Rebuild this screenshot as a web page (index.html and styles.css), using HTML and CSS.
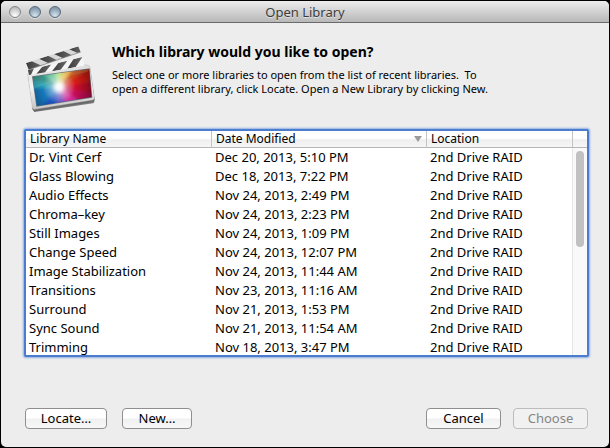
FILE: index.html
```
<!DOCTYPE html>
<html lang="en">
<head>
  <meta charset="UTF-8">
  <meta name="viewport" content="width=device-width, initial-scale=1.0">
  <title>Open Library</title>
  <link rel="stylesheet" href="styles.css">
</head>
<body>
  <div class="window">
    <header class="titlebar">
      <div class="lights">
        <button class="light close" aria-label="Close"></button>
        <button class="light" aria-label="Minimize"></button>
        <button class="light" aria-label="Zoom"></button>
      </div>
      <h1>Open Library</h1>
    </header>

    <main class="content">
      <div class="intro">
        <!-- Clapperboard -->
        <svg class="app-icon" viewBox="27 9 216 210" aria-hidden="true">
          <defs>
            <clipPath id="screen"><path d="M53 108L222 84L230 168L66 195Z"/></clipPath>
            <clipPath id="upper"><path d="M33 66L190 16L197 33L41 86Z"/></clipPath>
            <clipPath id="lower"><path d="M39 87L202 48L208 74L42 102Z"/></clipPath>
            <filter id="soft" x="-20%" y="-20%" width="140%" height="140%"><feGaussianBlur stdDeviation="4"/></filter>
            <filter id="shade" x="-20%" y="-20%" width="140%" height="140%"><feGaussianBlur stdDeviation="2"/></filter>
            <radialGradient id="glow" gradientUnits="userSpaceOnUse" cx="132" cy="138" r="50">
              <stop offset="0" stop-color="#fff"/>
              <stop offset="0.2" stop-color="#fff" stop-opacity="0.9"/>
              <stop offset="0.5" stop-color="#fff" stop-opacity="0.4"/>
              <stop offset="1" stop-color="#fff" stop-opacity="0"/>
            </radialGradient>
            <radialGradient id="edge" gradientUnits="userSpaceOnUse" cx="132" cy="138" r="105">
              <stop offset="0.5" stop-color="#000" stop-opacity="0"/>
              <stop offset="1" stop-color="#000" stop-opacity="0.4"/>
            </radialGradient>
            <linearGradient id="metal" x1="0" y1="0" x2="0" y2="1">
              <stop offset="0" stop-color="#dcdcdc"/>
              <stop offset="0.5" stop-color="#f4f4f4"/>
              <stop offset="1" stop-color="#c4c4c4"/>
            </linearGradient>
            <linearGradient id="dark" x1="0" y1="0" x2="1" y2="0">
              <stop offset="0" stop-color="#3a3a3a"/>
              <stop offset="1" stop-color="#686868"/>
            </linearGradient>
          </defs>
          <path d="M50 202L58 213L234 187Q239 186 238 180Z" fill="#333" opacity="0.6" filter="url(#shade)"/>
          <path d="M39 102L208 73L220 75Q224 76 225 80L239 175Q240 181 234 183L62 211Q56 212 54 206Z" fill="#686868"/>
          <path d="M38 99L208 71L219 73Q224 74 225 79L238 169Q239 175 233 177L60 205Q54 206 52 200Z" fill="url(#metal)" stroke="#aaa" stroke-width="1"/>
          <g clip-path="url(#lower)">
            <path d="M30 40H215V110H30Z" fill="#f5f5f5"/>
            <g fill="url(#dark)">
              <path d="M37 86L57 82L48 102H38Z"/>
              <path d="M82 77L109 70L88 97L62 101Z"/>
              <path d="M130 66L157 59L137 86L110 92Z"/>
              <path d="M175 55L203 47L182 78L157 83Z"/>
            </g>
          </g>
          <g clip-path="url(#upper)">
            <path d="M30 10H210V90H30Z" fill="#d8d8d8"/>
            <g fill="url(#dark)">
              <path d="M32 66L50 61L80 74L41 87Z"/>
              <path d="M72 53L99 44L126 58L101 67Z"/>
              <path d="M117 39L145 30L171 43L145 52Z"/>
              <path d="M163 25L190 16L198 33L188 36Z"/>
            </g>
          </g>
          <path d="M41 86L197 33" fill="none" stroke="#777" stroke-width="2"/>
          <path d="M51 106L224 82L232 170L64 197Z" fill="#777"/>
          <g clip-path="url(#screen)">
            <path d="M40 70H250V210H40Z" fill="#3974a8"/>
            <g filter="url(#soft)">
              <path d="M132 138L20 150L20 100Z" fill="#22a0b4"/>
              <path d="M132 138L20 108L40 60Z" fill="#268b80"/>
              <path d="M132 138L40 60L112 50Z" fill="#55bd8b"/>
              <path d="M132 138L108 50L155 50Z" fill="#a8dc62"/>
              <path d="M132 138L150 50L205 60Z" fill="#e6b23e"/>
              <path d="M132 138L192 60L250 70Z" fill="#c74914"/>
              <path d="M132 138L250 68L250 125Z" fill="#d81c13"/>
              <path d="M132 138L250 120L250 168Z" fill="#c90729"/>
              <path d="M132 138L250 160L228 210Z" fill="#c80b59"/>
              <path d="M132 138L230 205L165 225Z" fill="#cf2b95"/>
              <path d="M132 138L170 225L120 230Z" fill="#6940b7"/>
              <path d="M132 138L125 230L55 220Z" fill="#1b51bd"/>
              <path d="M132 138L60 220L20 145Z" fill="#1774b8"/>
            </g>
            <path d="M40 70H250V210H40Z" fill="url(#edge)"/>
            <path d="M40 70H250V210H40Z" fill="url(#glow)"/>
            <path d="M50 106L224 82L218 92Q150 106 55 144Z" fill="#fff" opacity="0.1"/>
          </g>
        </svg>
        <div class="message">
          <h2>Which library would you like to open?</h2>
          <p>Select one or more libraries to open from the list of recent libraries.&nbsp; To<br>
          open a different library, click Locate. Open a New Library by clicking New.</p>
        </div>
      </div>

      <div class="library-list">
        <table class="libraries">
          <colgroup>
            <col class="col-name">
            <col class="col-date">
            <col>
          </colgroup>
          <thead>
            <tr>
              <th scope="col">Library Name</th>
              <th scope="col" aria-sort="descending"><div class="sorted">Date Modified <span class="arrow"></span></div></th>
              <th scope="col">Location</th>
            </tr>
          </thead>
          <tbody>
            <tr><td>Dr. Vint Cerf</td><td>Dec 20, 2013, 5:10 PM</td><td>2nd Drive RAID</td></tr>
            <tr><td>Glass Blowing</td><td>Dec 18, 2013, 7:22 PM</td><td>2nd Drive RAID</td></tr>
            <tr><td>Audio Effects</td><td>Nov 24, 2013, 2:49 PM</td><td>2nd Drive RAID</td></tr>
            <tr><td>Chroma–key</td><td>Nov 24, 2013, 2:23 PM</td><td>2nd Drive RAID</td></tr>
            <tr><td>Still Images</td><td>Nov 24, 2013, 1:09 PM</td><td>2nd Drive RAID</td></tr>
            <tr><td>Change Speed</td><td>Nov 24, 2013, 12:07 PM</td><td>2nd Drive RAID</td></tr>
            <tr><td>Image Stabilization</td><td>Nov 24, 2013, 11:44 AM</td><td>2nd Drive RAID</td></tr>
            <tr><td>Transitions</td><td>Nov 23, 2013, 11:16 AM</td><td>2nd Drive RAID</td></tr>
            <tr><td>Surround</td><td>Nov 21, 2013, 1:53 PM</td><td>2nd Drive RAID</td></tr>
            <tr><td>Sync Sound</td><td>Nov 21, 2013, 11:54 AM</td><td>2nd Drive RAID</td></tr>
            <tr><td>Trimming</td><td>Nov 18, 2013, 3:47 PM</td><td>2nd Drive RAID</td></tr>
          </tbody>
        </table>
        <div class="scroll">
          <div class="scroll-corner"></div>
          <div class="scroll-track"><div class="scroll-thumb"></div></div>
        </div>
      </div>

      <footer class="actions">
        <button class="btn locate">Locate…</button>
        <button class="btn new">New…</button>
        <button class="btn cancel">Cancel</button>
        <button class="btn choose" disabled>Choose</button>
      </footer>
    </main>
  </div>
</body>
</html>
```
FILE: styles.css
```
* {
  margin: 0;
  padding: 0;
  box-sizing: border-box;
}

body {
  font-family: 'Lucida Grande', 'Noto Sans', sans-serif;
  font-size: 13px;
  color: #000;
  background: #000;
  height: 100vh;
  padding: 1px;
}

.window {
  display: flex;
  flex-direction: column;
  height: 100%;
  background: #ededed;
  border-radius: 5px;
  overflow: hidden;
}

.titlebar {
  display: grid;
  grid-template-columns: 1fr auto 1fr;
  align-items: center;
  height: 22px;
  padding: 0 8px;
  background: linear-gradient(#ececec, #b8b8b8);
  border-bottom: 1px solid #6a6a6a;
}

.titlebar h1 {
  font-size: 13px;
  font-weight: normal;
  line-height: 20px;
  color: #3c3c3c;
  text-shadow: 0 1px 0 rgba(255, 255, 255, 0.5);
}

.lights {
  display: flex;
  gap: 8px;
}

.light {
  width: 12px;
  height: 12px;
  border: 1px solid #57697a;
  border-radius: 50%;
  background: radial-gradient(circle at 50% 85%, #d5e5f0, #8499ab 75%);
  box-shadow: 0 1px 0 rgba(255, 255, 255, 0.5);
}

.light.close {
  border-color: #858585;
  background: radial-gradient(circle at 50% 85%, #fff, #bcbcbc 80%);
}

.content {
  display: flex;
  flex-direction: column;
  flex: 1;
  min-height: 0;
  padding: 20px 20px 18px 23px;
}

.intro {
  display: flex;
  gap: 16px;
  height: 86px;
}

.app-icon {
  width: 72px;
  height: 72px;
}

.message h2 {
  font-size: 14px;
  line-height: 18px;
}

.message p {
  margin-top: 7px;
  font-size: 11px;
  line-height: 14px;
}

/* List with the focus ring */
.library-list {
  display: flex;
  flex: 1;
  min-height: 0;
  overflow: hidden;
  background: #fff;
  border: 2px solid #4b7cce;
  border-radius: 2px;
  box-shadow: 0 0 2px 1px #8fb0e2;
}

.libraries {
  flex: 1;
  align-self: flex-start;
  table-layout: fixed;
  border-collapse: separate;
  border-spacing: 0;
}

.col-name {
  width: 185px;
}

.col-date {
  width: 215px;
}

th {
  height: 17px;
  padding: 0 4px;
  font-size: 12px;
  font-weight: normal;
  line-height: 16px;
  text-align: left;
  background: linear-gradient(#fff 45%, #efefef 55%, #f6f6f6);
  border-bottom: 1px solid #b5b5b5;
}

th + th {
  border-left: 1px solid #c4c4c4;
}

.sorted {
  display: flex;
  align-items: center;
  justify-content: space-between;
}

.arrow {
  border: 4px solid transparent;
  border-top: 6px solid #9b9b9b;
  border-bottom: 0;
}

td {
  height: 19px;
  padding: 0 4px;
  line-height: 19px;
  white-space: nowrap;
}

td:first-child {
  padding-left: 3px;
}

.scroll {
  display: flex;
  flex-direction: column;
  width: 15px;
}

.scroll-corner {
  height: 17px;
  background: linear-gradient(#fff 45%, #efefef 55%, #f6f6f6);
  border-left: 1px solid #c4c4c4;
  border-bottom: 1px solid #b5b5b5;
}

.scroll-track {
  flex: 1;
  padding: 3px;
  background: #f9f9f9;
  border-left: 1px solid #e6e6e6;
}

.scroll-thumb {
  width: 8px;
  height: 48%;
  border-radius: 4px;
  background: #c1c1c1;
}

.actions {
  display: flex;
  gap: 12px;
  margin-top: 51px;
  padding: 0 1px;
}

.btn {
  width: 75px;
  height: 21px;
  font-family: inherit;
  font-size: 13px;
  line-height: 19px;
  color: #000;
  background: linear-gradient(#fff 45%, #f1f1f1 55%, #f7f7f7);
  border: 1px solid #8f8f8f;
  border-radius: 4px;
}

.locate {
  width: 82px;
}

.new {
  width: 70px;
  margin: 0 auto 0 3px;
}

.btn:disabled {
  color: #858585;
  background: #f1f1f1;
  border-color: #bcbcbc;
}
```
